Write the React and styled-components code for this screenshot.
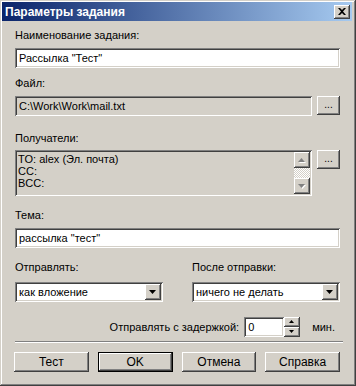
import React from "react";
import styled, { createGlobalStyle, css } from "styled-components";

const GlobalStyle = createGlobalStyle`
  html, body { margin: 0; padding: 0; background: #d4d0c8; }
  body { font-family: "Liberation Sans", Arial, sans-serif; font-size: 11px; color: #000; }
  * { box-sizing: border-box; }
`;

const raised = css`
  background: #d4d0c8;
  box-shadow: inset -1px -1px #404040, inset 1px 1px #fff, inset -2px -2px #808080;
`;

const sunken = css`
  box-shadow: inset 1px 1px #808080, inset -1px -1px #fff, inset 2px 2px #404040, inset -2px -2px #d4d0c8;
`;

const Window = styled.div`
  width: 356px;
  height: 386px;
  background: #d4d0c8;
  padding: 2px 4px 4px 2px;
  box-shadow: inset -1px -1px #404040, inset 1px 1px #d4d0c8, inset -2px -2px #808080, inset 2px 2px #fff;
  display: flex;
  flex-direction: column;
`;

const TitleBar = styled.div`
  height: 19px;
  display: flex;
  align-items: center;
  justify-content: space-between;
  padding: 0 2px 0 3px;
  background: linear-gradient(to right, #0a246a, #a6caf0);
`;

const Title = styled.span`
  color: #fff;
  font-weight: bold;
  font-size: 12px;
`;

const CloseButton = styled.div`
  ${raised};
  width: 16px;
  height: 14px;
  display: flex;
  align-items: center;
  justify-content: center;
`;

const Body = styled.div`
  padding: 8px 12px 0 13px;
  display: flex;
  flex-direction: column;
`;

const Label = styled.div`
  height: 13px;
  line-height: 13px;
  margin-top: ${(p) => p.$top || 0}px;
  margin-bottom: ${(p) => p.$bottom || 6}px;
`;

const Field = styled.div`
  ${sunken};
  height: 20px;
  padding: 0 4px;
  display: flex;
  align-items: center;
  background: ${(p) => (p.$disabled ? "#d4d0c8" : "#fff")};
  flex: ${(p) => (p.$grow ? 1 : "none")};
  width: ${(p) => (p.$width ? `${p.$width}px` : "auto")};
  white-space: nowrap;
  overflow: hidden;
`;

const Row = styled.div`
  display: flex;
  align-items: flex-start;
  gap: 5px;
`;

const SmallButton = styled.div`
  ${raised};
  width: 23px;
  height: 19px;
  margin-top: ${(p) => p.$top || 0}px;
  display: flex;
  align-items: center;
  justify-content: center;
  padding-bottom: 2px;
  font-size: 10px;
`;

const ListBox = styled.div`
  ${sunken};
  flex: 1;
  height: 46px;
  padding: 2px;
  display: flex;
  background: #d4d0c8;
`;

const ListLines = styled.div`
  flex: 1;
  padding: 1px 1px 0 1px;
  line-height: 12px;
`;

const ScrollBar = styled.div`
  width: 16px;
  display: flex;
  flex-direction: column;
`;

const ScrollButton = styled.div`
  ${raised};
  width: 16px;
  height: ${(p) => p.$h || 16}px;
  display: flex;
  align-items: center;
  justify-content: center;
`;

const Track = styled.div`
  flex: 1;
  background: repeating-conic-gradient(#fff 0 25%, #d4d0c8 0 50%) 0 0 / 2px 2px;
`;

const SelectGrid = styled.div`
  display: grid;
  grid-template-columns: 148px 148px;
  column-gap: 29px;
`;

const SelectBox = styled.div`
  ${sunken};
  height: 20px;
  padding: 2px;
  display: flex;
  background: #fff;
`;

const SelectText = styled.div`
  flex: 1;
  padding-left: 2px;
  display: flex;
  align-items: center;
`;

const DelayRow = styled.div`
  display: flex;
  align-items: center;
  justify-content: flex-end;
  margin-top: 15px;
  padding-right: 5px;
  height: 20px;
`;

const Spin = styled.div`
  display: flex;
  margin-left: 5px;
  margin-right: 13px;
`;

const SpinButtons = styled.div`
  display: flex;
  flex-direction: column;
  width: 15px;
  height: 20px;
`;

const Separator = styled.div`
  margin: 4px -3px 0 0;
  height: 2px;
  border-top: 1px solid #808080;
  border-bottom: 1px solid #fff;
`;

const ButtonBar = styled.div`
  display: flex;
  gap: 9px;
  margin: 9px 0 0 -1px;
`;

const Button = styled.div`
  width: 75px;
  height: 20px;
  display: flex;
  align-items: center;
  justify-content: center;
  font-size: 12px;
  ${(p) =>
    p.$default
      ? css`
          background: #d4d0c8;
          border: 1px solid #000;
          box-shadow: inset -1px -1px #404040, inset 1px 1px #fff, inset -2px -2px #808080;
        `
      : raised};
`;

const Arrow = ({ dir = "down", color = "#000", shadow = false, w = 7 }) => {
  const h = Math.ceil(w / 2);
  const pts = dir === "down" ? `0,0 ${w},0 ${w / 2},${h}` : `0,${h} ${w},${h} ${w / 2},0`;
  return (
    <svg width={w + 1} height={h + 1} viewBox={`0 0 ${w + 1} ${h + 1}`}>
      {shadow && <polygon points={pts} fill="#fff" transform="translate(1,1)" />}
      <polygon points={pts} fill={color} />
    </svg>
  );
};

const App = () => (
  <>
    <GlobalStyle />
    <Window>
      <TitleBar>
        <Title>Параметры задания</Title>
        <CloseButton>
          <svg width="8" height="7" viewBox="0 0 8 7">
            <path d="M0 0h2l2 2 2-2h2L5 3.5 8 7H6L4 5 2 7H0l3-3.5z" fill="#000" />
          </svg>
        </CloseButton>
      </TitleBar>
      <Body>
        <Label>Наименование задания:</Label>
        <Field>Рассылка "Тест"</Field>

        <Label $top={9}>Файл:</Label>
        <Row>
          <Field $grow $disabled>C:\Work\Work\mail.txt</Field>
          <SmallButton>...</SmallButton>
        </Row>

        <Label $top={16} $bottom={5}>Получатели:</Label>
        <Row>
          <ListBox>
            <ListLines>
              <div>TO: alex (Эл. почта)</div>
              <div>CC:</div>
              <div>BCC:</div>
            </ListLines>
            <ScrollBar>
              <ScrollButton>
                <Arrow dir="up" color="#808080" shadow />
              </ScrollButton>
              <Track />
              <ScrollButton>
                <Arrow dir="down" color="#808080" shadow />
              </ScrollButton>
            </ScrollBar>
          </ListBox>
          <SmallButton>...</SmallButton>
        </Row>

        <Label $top={13}>Тема:</Label>
        <Field>рассылка "тест"</Field>

        <SelectGrid>
          <Label $top={13} $bottom={8}>Отправлять:</Label>
          <Label $top={13} $bottom={8}>После отправки:</Label>
          <SelectBox>
            <SelectText>как вложение</SelectText>
            <ScrollButton>
              <Arrow />
            </ScrollButton>
          </SelectBox>
          <SelectBox>
            <SelectText>ничего не делать</SelectText>
            <ScrollButton>
              <Arrow />
            </ScrollButton>
          </SelectBox>
        </SelectGrid>

        <DelayRow>
          <span>Отправлять с задержкой:</span>
          <Spin>
            <Field $width={40}>0</Field>
            <SpinButtons>
              <ScrollButton $h={10}>
                <Arrow dir="up" w={5} />
              </ScrollButton>
              <ScrollButton $h={10}>
                <Arrow dir="down" w={5} />
              </ScrollButton>
            </SpinButtons>
          </Spin>
          <span>мин.</span>
        </DelayRow>

        <Separator />

        <ButtonBar>
          <Button>Тест</Button>
          <Button $default>OK</Button>
          <Button>Отмена</Button>
          <Button>Справка</Button>
        </ButtonBar>
      </Body>
    </Window>
  </>
);

export default App;
